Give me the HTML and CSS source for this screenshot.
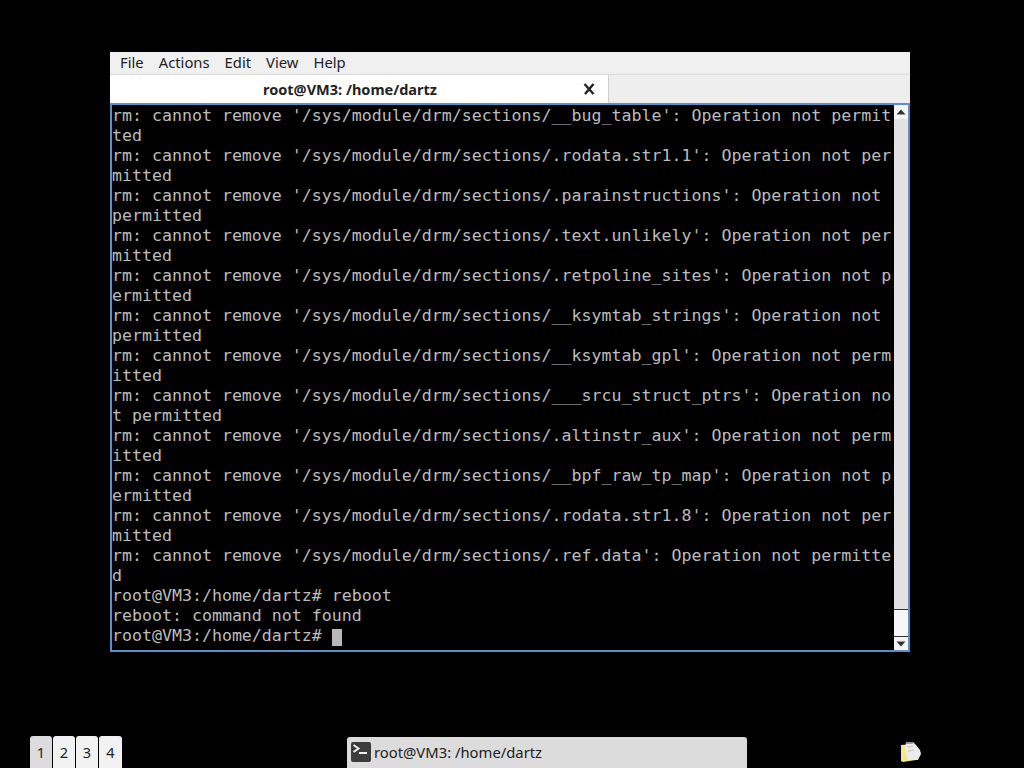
FILE: index.html
```html
<!DOCTYPE html>
<html lang="en">
<head>
<meta charset="utf-8">
<title>root@VM3: /home/dartz</title>
<link rel="stylesheet" href="styles.css">
</head>
<body>
<div class="desktop">
  <main class="window">
    <nav class="menubar">
      <span class="menu">File</span><span class="menu">Actions</span><span class="menu">Edit</span><span class="menu">View</span><span class="menu">Help</span>
    </nav>
    <div class="tabbar">
      <div class="tab">
        <span class="tab-title">root@VM3: /home/dartz</span>
        <svg class="tab-close" width="14" height="14" viewBox="0 0 14 14" aria-hidden="true"><path d="M2.5 2 L11.5 12 M11.5 2 L3 12" stroke="#222" stroke-width="2.4" fill="none"/></svg>
      </div>
    </div>
    <div class="terminal">
<pre class="output">rm: cannot remove '/sys/module/drm/sections/__bug_table': Operation not permit
ted
rm: cannot remove '/sys/module/drm/sections/.rodata.str1.1': Operation not per
mitted
rm: cannot remove '/sys/module/drm/sections/.parainstructions': Operation not 
permitted
rm: cannot remove '/sys/module/drm/sections/.text.unlikely': Operation not per
mitted
rm: cannot remove '/sys/module/drm/sections/.retpoline_sites': Operation not p
ermitted
rm: cannot remove '/sys/module/drm/sections/__ksymtab_strings': Operation not 
permitted
rm: cannot remove '/sys/module/drm/sections/__ksymtab_gpl': Operation not perm
itted
rm: cannot remove '/sys/module/drm/sections/___srcu_struct_ptrs': Operation no
t permitted
rm: cannot remove '/sys/module/drm/sections/.altinstr_aux': Operation not perm
itted
rm: cannot remove '/sys/module/drm/sections/__bpf_raw_tp_map': Operation not p
ermitted
rm: cannot remove '/sys/module/drm/sections/.rodata.str1.8': Operation not per
mitted
rm: cannot remove '/sys/module/drm/sections/.ref.data': Operation not permitte
d
root@VM3:/home/dartz# reboot
reboot: command not found
root@VM3:/home/dartz# <span class="cursor"> </span></pre>
      <div class="scrollbar">
        <div class="arrow"><svg width="12" height="8" viewBox="0 0 12 8" aria-hidden="true"><path d="M1.5 6.5 L6 1.5 L10.5 6.5 Z" fill="#333"/></svg></div>
        <div class="trough"></div>
        <div class="thumb"></div>
        <div class="arrow arrow-down"><svg width="12" height="8" viewBox="0 0 12 8" aria-hidden="true"><path d="M1.5 1.5 L6 6.5 L10.5 1.5 Z" fill="#333"/></svg></div>
      </div>
    </div>
  </main>
  <footer class="panel">
    <div class="pager">
      <span class="desk desk-active">1</span><span class="desk">2</span><span class="desk">3</span><span class="desk desk-last">4</span>
    </div>
    <div class="task">
      <svg class="task-icon" width="20" height="20" viewBox="0 0 20 20" aria-hidden="true"><rect width="20" height="20" rx="2" fill="#3c3c3c"/><path d="M2.5 3 L7.5 6.5 L2.5 10" stroke="#eee" stroke-width="2" fill="none"/><rect x="8" y="10" width="8" height="2" fill="#eee"/></svg>
      <span>root@VM3: /home/dartz</span>
    </div>
    <svg class="notes" width="22" height="22" viewBox="0 0 22 22" aria-hidden="true">
      <path d="M1 4 L14 3 L16 19 L3 21 L1 20 Z" fill="#f4e68c"/>
      <path d="M6 1 L13 1 L16 4 L20 9 L21 13 L18 19 L8 19 L5 9 Z" fill="#ececec"/>
      <path d="M6 2 L13 2" stroke="#9a9a9a" stroke-width="2"/>
      <path d="M7 6 L13 5 M8 10 L14 9" stroke="#c4c4c4" stroke-width="1"/>
    </svg>
  </footer>
</div>
</body>
</html>
```

FILE: styles.css
```css
* { box-sizing: border-box; }
html, body { margin: 0; height: 100%; background: #000; }
.desktop {
  width: 1024px;
  height: 768px;
  display: flex;
  flex-direction: column;
  overflow: hidden;
  padding-top: 52px;
}
.window {
  width: 800px;
  height: 600px;
  margin-left: 110px;
  display: flex;
  flex-direction: column;
  background: #eeeeee;
  font-family: "Noto Sans", "DejaVu Sans", sans-serif;
  color: #222;
}
.menubar {
  height: 20px;
  margin-bottom: 2px;
  flex: none;
  display: flex;
  align-items: center;
  gap: 15px;
  padding-left: 10px;
  font-size: 14.8px;
  background: #f0f0f0;
}
.tabbar {
  height: 29px;
  flex: none;
  display: flex;
  background: #eeeeee;
  border-top: 1px solid #dcdcdc;
}
.tab {
  width: 499px;
  position: relative;
  display: flex;
  align-items: center;
  justify-content: center;
  padding-right: 18px;
  background: #fff;
  border-right: 1px solid #cfcfcf;
}
.tab-title {
  font-weight: 700;
  font-size: 14.5px;
}
.tab-close { position: absolute; right: 12px; top: 7px; }
.terminal {
  flex: 1;
  min-height: 0;
  display: flex;
  background: #000;
  border: 2px solid #5b8fc9;
}
.output {
  flex: 1;
  margin: 0;
  padding: 1px 0 0;
  overflow: hidden;
  font-family: "DejaVu Sans Mono", monospace;
  font-size: 16.6px;
  line-height: 20px;
  color: #bcbcbc;
  white-space: pre;
}
.cursor {
  display: inline-block;
  width: 10px;
  height: 17px;
  vertical-align: -3px;
  background: #b8b8b8;
}
.scrollbar {
  width: 14px;
  flex: none;
  display: flex;
  flex-direction: column;
  background: #e4e4e4;
}
.arrow {
  height: 14px;
  flex: none;
  display: flex;
  align-items: center;
  justify-content: center;
  background: #f4f4f4;
}
.arrow-down { border-top: 1px solid #333; }
.trough { flex: 1; background: #e2e2e2; }
.thumb {
  height: 27px;
  flex: none;
  background: #f6f6f6;
  border-top: 1px solid #333;
}
.panel {
  flex: 1;
  display: flex;
  align-items: flex-end;
  font-family: "Noto Sans", "DejaVu Sans", sans-serif;
  color: #222;
}
.pager {
  display: flex;
  gap: 1px;
  margin-left: 30px;
}
.desk {
  width: 22px;
  height: 32px;
  display: flex;
  align-items: center;
  justify-content: center;
  font-size: 14.5px;
  background: #f2f2f2;
  border-radius: 3px 3px 0 0;
}
.desk-last { width: 23px; }
.desk-active { background: #dcdcdc; }
.task {
  width: 400px;
  height: 31px;
  margin-left: 225px;
  display: flex;
  align-items: center;
  gap: 3px;
  padding: 0 0 2px 4px;
  font-size: 14.8px;
  background: #dcdcdc;
  border-radius: 3px 3px 0 0;
}
.task-icon { flex: none; }
.notes {
  margin-left: 153px;
  margin-bottom: 5px;
}
```
